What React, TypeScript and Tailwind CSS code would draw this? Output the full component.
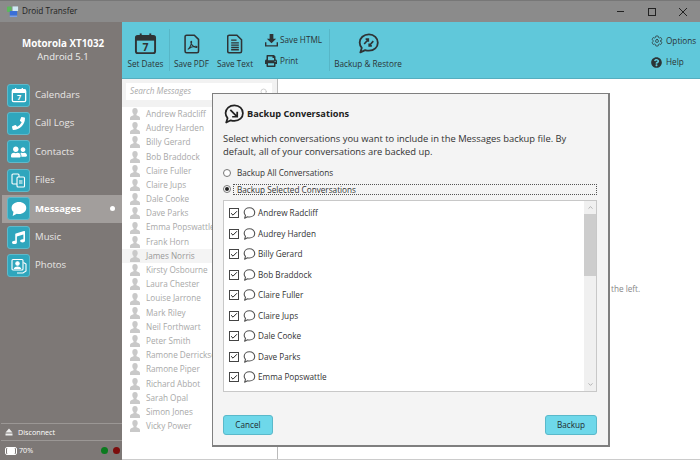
import { FaPrint, FaQuestionCircle, FaPhoneAlt, FaMusic, FaUserFriends } from "react-icons/fa";
import { IoSettingsOutline } from "react-icons/io5";
import { Check, ChevronUp, ChevronDown, Search } from "lucide-react";

const names = ["Andrew Radcliff","Audrey Harden","Billy Gerard","Bob Braddock","Claire Fuller","Claire Jups","Dale Cooke","Dave Parks","Emma Popswattle","Frank Horn","James Norris","Kirsty Osbourne","Laura Chester","Louise Jarrone","Mark Riley","Neil Forthwart","Peter Smith","Ramone Derrickson","Ramone Piper","Richard Abbot","Sarah Opal","Simon Jones","Vicky Power"];
const dlg = names.slice(0, 9);

function CalIcon({ s = 24, c = "#2f3335" }: { s?: number; c?: string }) {
  return (
    <svg width={s} height={s} viewBox="0 0 24 24">
      <rect x="2" y="4" width="20" height="18" rx="2" fill="none" stroke={c} strokeWidth="2" />
      <rect x="2" y="4" width="20" height="5" fill={c} />
      <rect x="6" y="1.5" width="2" height="4" fill={c} />
      <rect x="16" y="1.5" width="2" height="4" fill={c} />
      <text x="12" y="20" textAnchor="middle" fontSize="11" fontWeight="700" fontFamily="Open Sans" fill={c}>7</text>
    </svg>
  );
}
function Bubble({ s = 15, c = "#555", w = 1.3 }: { s?: number; c?: string; w?: number }) {
  return (
    <svg width={s} height={s} viewBox="0 0 16 16">
      <path d="M8.5 2C5 2 2.5 4.3 2.5 7.2c0 1.4.6 2.6 1.5 3.5L3 14l3.4-1.7c.6.2 1.3.3 2.1.3 3.4 0 6-2.3 6-5.3S11.9 2 8.5 2z" fill="none" stroke={c} strokeWidth={w} strokeLinejoin="round" />
    </svg>
  );
}
function BackupBubble({ s = 24, c = "#2f3335", restore = false }: { s?: number; c?: string; restore?: boolean }) {
  return (
    <svg width={s} height={s} viewBox="0 0 24 24">
      <path d="M12.5 2.5C7 2.5 2.8 6.2 2.8 11c0 2.1.8 4 2.2 5.5L3.5 21.3l5-2.4c1.2.4 2.5.6 4 .6 5.4 0 9.2-3.7 9.2-8.4s-3.8-8.6-9.2-8.6z" fill="none" stroke={c} strokeWidth="1.9" strokeLinejoin="round" />
      {restore ? (
        <g stroke={c} strokeWidth="1.7" fill="none">
          <path d="M7.5 12.5l4-4.5M9 7.5h2.8v2.6" />
          <path d="M17 9.5l-4 4.5M15.5 14.5h-2.8v-2.6" />
        </g>
      ) : (
        <g stroke={c} strokeWidth="1.9" fill="none">
          <path d="M8 7.5l7 7M15.5 9.5v5.5H10" />
        </g>
      )}
    </svg>
  );
}
function FileTxt() {
  return (
    <svg width="16" height="20" viewBox="0 0 20 26">
      <path d="M2.5 1.5h10l6 6v15a2 2 0 0 1-2 2h-14a2 2 0 0 1-2-2v-19a2 2 0 0 1 2-2z" fill="none" stroke="#2f3335" strokeWidth="2" />
      <path d="M5 8h7M5 11.5h10M5 14.5h10M5 17.5h10M5 20.5h10" stroke="#2f3335" strokeWidth="1.8" />
    </svg>
  );
}
function FilePdf() {
  return (
    <svg width="16" height="20" viewBox="0 0 20 26">
      <path d="M3 1.5h10l5.5 5.5v15.500a2 2 0 0 1-2 2H3a2 2 0 0 1-2-2v-19a2 2 0 0 1 2-2z" fill="none" stroke="#2f3335" strokeWidth="2" />
      <path d="M4.500 20c2-1 4-4.500 5-9 .3-2-1-2-1-.5 0 3 3 6.500 7 7 1.500 0 1.500-1.500-.5-1.500-3 0-7 1-10.500 4z" fill="none" stroke="#2f3335" strokeWidth="1.400" />
    </svg>
  );
}
function Download() {
  return (
    <svg width="13" height="13" viewBox="0 0 14 14" fill="#2f3335">
      <path d="M5 0h4v5h3L7 10 2 5h3z" />
      <path d="M0 9h1.500v3h11V9H14v4.500H0z" />
    </svg>
  );
}
function User() {
  return (
    <svg width="10" height="12" viewBox="0 0 10 12" fill="#c9c9c9">
      <path d="M5 0C3.300 0 2.300 1.200 2.300 3c0 1.300.5 2.400 1.200 3v1.200C2 7.800 0 8.500 0 10v2h10v-2c0-1.500-2-2.200-3.500-2.800V6c.7-.6 1.200-1.700 1.200-3C7.700 1.200 6.700 0 5 0z" />
    </svg>
  );
}
function NavIcon({ children }: { children: React.ReactNode }) {
  return (
    <div className="w-[23px] h-[23px] rounded-[3px] bg-[#2fa6bd] border border-[#5fb9ca] flex items-center justify-center text-white shrink-0">
      {children}
    </div>
  );
}
function Nav({ label, icon, active }: { label: string; icon: React.ReactNode; active?: boolean }) {
  return (
    <div className={`h-[28.4px] flex items-center pl-[5px] ml-[2px] relative ${active ? "bg-[#a29e9c] text-white font-bold" : "text-[#e8e6e5]"}`}>
      <NavIcon>{icon}</NavIcon>
      <span className="ml-[5px] text-[9.6px]">{label}</span>
      {active && <span className="absolute right-[7px] top-[11.500px] w-[5px] h-[5px] rounded-full bg-white" />}
    </div>
  );
}

export default function App() {
  return (
    <div className="w-[700px] h-[460px] overflow-hidden relative flex flex-col bg-white text-[#333] font-['Open_Sans',sans-serif]">
      {/* title bar */}
      <div className="h-[22px] bg-[#8b8b8b] border-t border-[#777] flex items-center pl-[7px] shrink-0">
        <svg width="12" height="13" viewBox="0 0 13 13">
          <rect x="0" y="1" width="5" height="6" rx="1" fill="#5cb85c" />
          <rect x="6" y="1" width="6" height="5" fill="#cfe9f5" />
          <rect x="3" y="6" width="8" height="5" fill="#3a6fd8" />
          <rect x="3" y="11" width="8" height="1.500" fill="#7aa0e8" />
        </svg>
        <span className="ml-[3px] text-[8.2px] text-[#222]">Droid Transfer</span>
        <div className="ml-auto flex items-center text-[#222]">
          <div className="w-[7px] h-[1px] bg-[#222] mr-[24px]" />
          <div className="w-[8px] h-[8px] border border-[#222] mr-[23px]" />
          <svg width="8" height="8" viewBox="0 0 8 8" className="mr-[13px]"><path d="M0 0l8 8M8 0L0 8" stroke="#222" strokeWidth="1" /></svg>
        </div>
      </div>

      <div className="flex flex-1 min-h-0">
        {/* sidebar */}
        <div className="w-[122px] bg-[#7d7876] flex flex-col shrink-0 text-white">
          <div className="h-[59px] flex flex-col items-center pt-[15px] pl-[4px]">
            <div className="text-[9.8px] font-bold leading-[13px]">Motorola XT1032</div>
            <div className="text-[9.5px] leading-[13px] text-[#eee]">Android 5.1</div>
          </div>
          <div>
            <Nav label="Calendars" icon={<CalIcon s={16} c="#fff" />} />
            <Nav label="Call Logs" icon={<FaPhoneAlt size={13} style={{ transform: "scaleX(-1)" }} />} />
            <Nav label="Contacts" icon={<FaUserFriends size={16} />} />
            <Nav label="Files" icon={
              <svg width="15" height="15" viewBox="0 0 15 15" fill="none" stroke="#fff" strokeWidth="1.100">
                <rect x="1" y="1" width="7" height="10" rx="1" />
                <rect x="6" y="4" width="7.500" height="10" rx="1" fill="#2fa6bd" />
                <path d="M8 8h3.500M8 10h3.500" />
              </svg>
            } />
            <Nav active label="Messages" icon={
              <svg width="17" height="16" viewBox="0 0 16 15" fill="#fff"><path d="M8.500 1C4.500 1 1.500 3.400 1.500 6.500c0 1.500.7 2.800 1.800 3.700L2.500 14l3.900-2c.7.100 1.400.2 2.100.2 3.800 0 6.800-2.500 6.800-5.700S12.300 1 8.500 1z" /></svg>
            } />
            <Nav label="Music" icon={<FaMusic size={13} />} />
            <Nav label="Photos" icon={
              <svg width="16" height="16" viewBox="0 0 16 16" fill="none" stroke="#fff" strokeWidth="1.100">
                <path d="M12.500 4.500L15 6v7l-3 2H6" />
                <rect x="1" y="1.500" width="11" height="10.500" rx="1" />
                <circle cx="6.500" cy="5.500" r="1.700" fill="#fff" />
                <path d="M3.500 10.500c.5-2 5.500-2 6 0z" fill="#fff" />
              </svg>
            } />
          </div>
          <div className="mt-auto">
            <div className="h-[18px] ml-[1px] border-t border-b border-[#9b9795] flex items-center pl-[4px]">
              <svg width="8" height="8" viewBox="0 0 8 8" fill="#eee"><path d="M4 0.500L7.500 4.500H.5zM.5 5.500h7V7.500h-7z" /></svg>
              <span className="ml-[5px] text-[7.2px] text-white">Disconnect</span>
            </div>
            <div className="h-[19px] flex items-center pl-[5px]">
              <div className="w-[12px] h-[8px] rounded-[2px] border border-white flex items-center justify-end pr-[1px]"><div className="w-[8px] h-[6px] bg-white rounded-[1px]" /></div>
              <span className="ml-[2px] text-[7.2px] text-white">70%</span>
              <span className="ml-auto w-[7px] h-[7px] rounded-full bg-[#0b7a1e]" />
              <span className="ml-[5px] mr-[2px] w-[7px] h-[7px] rounded-full bg-[#7c0c0c]" />
            </div>
          </div>
        </div>

        <div className="flex-1 flex flex-col min-w-0">
          {/* toolbar */}
          <div className="h-[57px] bg-[#60c8da] border-b border-[#55aebf] flex shrink-0 text-[8.2px] text-[#2b3436]">
            <div className="w-[47px] flex flex-col items-center pt-[10px]">
              <CalIcon s={23} />
              <span className="mt-[3px] whitespace-nowrap leading-[12px]">Set Dates</span>
            </div>
            <div className="w-px my-[7px] bg-[#57b6c7]" />
            <div className="w-[43px] flex flex-col items-center pt-[12px]">
              <FilePdf />
              <span className="mt-[4px] whitespace-nowrap leading-[12px]">Save PDF</span>
            </div>
            <div className="w-[44px] flex flex-col items-center pt-[12px]">
              <FileTxt />
              <span className="mt-[4px] whitespace-nowrap leading-[12px]">Save Text</span>
            </div>
            <div className="w-[72px] flex flex-col pl-[8px] pt-[11px] gap-[7px]">
              <div className="h-[14px] flex items-center gap-[2px] whitespace-nowrap"><Download /><span>Save HTML</span></div>
              <div className="h-[14px] flex items-center gap-[3px]"><FaPrint size={12} /><span>Print</span></div>
            </div>
            <div className="w-px my-[7px] bg-[#57b6c7]" />
            <div className="w-[76px] flex flex-col items-center pt-[10px]">
              <BackupBubble s={23} restore />
              <span className="mt-[3px] whitespace-nowrap leading-[12px]">Backup &amp; Restore</span>
            </div>
            <div className="ml-auto w-[50px] pt-[12px] flex flex-col gap-[7px] pl-[1px]">
              <div className="h-[14px] flex items-center gap-[3px]"><IoSettingsOutline size={12} /><span>Options</span></div>
              <div className="h-[14px] flex items-center gap-[4px]"><FaQuestionCircle size={11} /><span>Help</span></div>
            </div>
          </div>

          <div className="flex-1 flex min-h-0 border-b border-[#ccc]">
            {/* messages */}
            <div className="w-[156px] border-r border-[#bbb] shrink-0 flex flex-col">
              <div className="h-[28px] bg-[#f2f2f2] px-[4px] pt-[4px] pr-[5px] shrink-0">
                <div className="h-[17px] bg-white flex items-center px-[4px] italic text-[8.2px] text-[#aaa]">
                  Search Messages
                  <Search size={8} className="ml-auto text-[#bbb]" />
                </div>
              </div>
              <div>
                {names.map((n) => (
                  <div key={n} className={`h-[14.200px] flex items-center pl-[8px] text-[8.2px] whitespace-nowrap overflow-hidden ${n === "James Norris" ? "bg-[#f4f4f4] text-[#999]" : "text-[#a8a8a8]"}`}>
                    <User />
                    <span className="ml-[6px]">{n}</span>
                  </div>
                ))}
              </div>
            </div>
            {/* detail */}
            <div className="flex-1 relative">
              <span className="absolute left-[333px] top-[204px] text-[8.2px] text-[#888]">the left.</span>
            </div>
          </div>
        </div>
      </div>

      {/* dialog */}
      <div className="absolute left-[212px] top-[93px] w-[398px] h-[354px] bg-[#f4f4f4] border border-[#7f7f7f] border-r-2 border-b-2 flex flex-col pl-[10px] pr-[11px] text-[#222]">
        <div className="flex items-center mt-[9px] h-[22px]">
          <BackupBubble s={22} c="#222" />
          <span className="ml-[2px] text-[9.2px] font-bold">Backup Conversations</span>
        </div>
        <p className="mt-[7px] text-[9.4px] leading-[13px] text-[#333]">Select which conversations you want to include in the Messages backup file. By default, all of your conversations are backed up.</p>
        <div className="flex items-center mt-[9px] h-[12px]">
          <span className="w-[8px] h-[8px] rounded-full border border-[#777] bg-white" />
          <span className="ml-[6px] text-[8.2px] text-[#333]">Backup All Conversations</span>
        </div>
        <div className="flex items-center mt-[4px] h-[12px]">
          <span className="w-[8px] h-[8px] rounded-full border border-[#777] bg-white flex items-center justify-center"><span className="w-[4px] h-[4px] rounded-full bg-[#222]" /></span>
          <span className="ml-[2px] flex-1 h-[11px] border border-dotted border-[#555] pl-[3px] text-[8.2px] leading-[9px] text-[#333]">Backup Selected Conversations</span>
        </div>
        <div className="mt-[5px] h-[192px] bg-white border border-[#c8c8c8] flex">
          <div className="flex-1 pt-[2px] pl-[5px]">
            {dlg.map((n) => (
              <div key={n} className="h-[20.500px] flex items-center">
                <span className="w-[10px] h-[10px] border border-[#444] bg-white flex items-center justify-center"><Check size={9} strokeWidth={3} className="text-[#222]" /></span>
                <span className="ml-[3px]"><Bubble s={14} /></span>
                <span className="ml-[2px] text-[8.2px] text-[#333]">{n}</span>
              </div>
            ))}
          </div>
          <div className="w-[12px] bg-[#f0f0f0] flex flex-col items-center">
            <div className="h-[13px] flex items-center"><ChevronUp size={7} className="text-[#888]" /></div>
            <div className="w-full h-[62px] bg-[#cdcdcd]" />
            <div className="mt-auto h-[13px] flex items-center"><ChevronDown size={7} className="text-[#888]" /></div>
          </div>
        </div>
        <div className="flex justify-between mt-[23px]">
          <div className="w-[50px] h-[20px] rounded-[3px] bg-[#6ed8ea] border border-[#5ab9ca] flex items-center justify-center text-[8.2px] text-[#1f2b2e]">Cancel</div>
          <div className="w-[52px] h-[20px] rounded-[3px] bg-[#6ed8ea] border border-[#5ab9ca] flex items-center justify-center text-[8.2px] text-[#1f2b2e]">Backup</div>
        </div>
      </div>
    </div>
  );
}
